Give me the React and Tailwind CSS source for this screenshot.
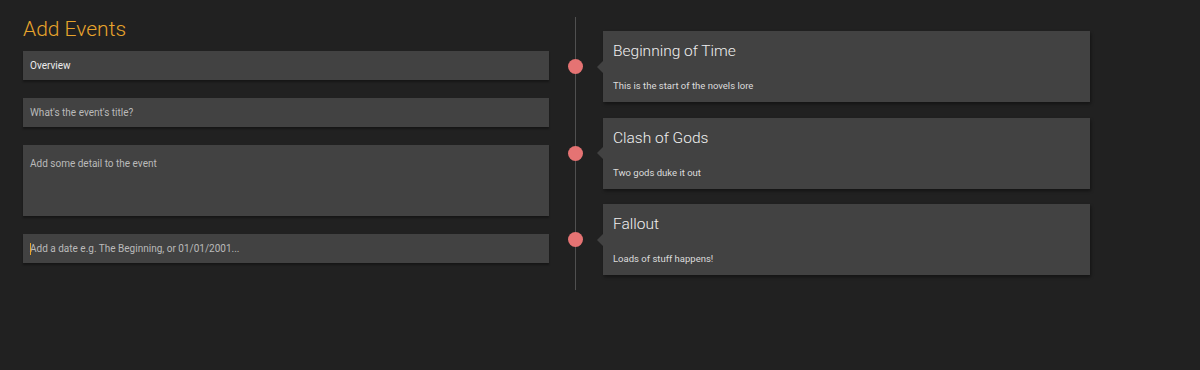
const events = [
  { title: 'Beginning of Time', body: 'This is the start of the novels lore' },
  { title: 'Clash of Gods', body: 'Two gods duke it out' },
  { title: 'Fallout', body: 'Loads of stuff happens!' },
];

const Field = ({ children, tall, value, caret }) => (
  <div
    className={`relative bg-[#424242] shadow-[0_2px_2px_rgba(0,0,0,0.35)] px-[7px] text-[10px] ${
      value ? 'text-[#ececec]' : 'text-[#bababa]'
    } ${tall ? 'h-[71px] pt-[11px]' : 'h-[29px] flex items-center'}`}
  >
    {caret && <span className="absolute left-[7px] top-[9px] w-[1px] h-[12px] bg-[#e8a42c]" />}
    {children}
  </div>
);

const EventCard = ({ title, body }) => (
  <div className="flex items-center h-[71px]">
    <div className="ml-[19px] w-[15px] h-[15px] rounded-full bg-[#e57373] shrink-0" />
    <div className="relative ml-[20px] w-[487px] h-full bg-[#424242] shadow-[1px_2px_3px_rgba(0,0,0,0.4)] px-[10px] pt-[9px]">
      <div className="absolute left-[-6px] top-1/2 -translate-y-1/2 w-0 h-0 border-y-[6px] border-y-transparent border-r-[6px] border-r-[#424242]" />
      <div className="text-[15.5px] font-light text-[#f0f0f0] leading-[22px]">{title}</div>
      <div className="mt-[17px] text-[9.5px] text-[#dcdcdc]">{body}</div>
    </div>
  </div>
);

const App = () => {
  return (
    <div className="w-[1200px] h-[370px] bg-[#212121] flex font-['Roboto',sans-serif]">
      <div className="ml-[23px] w-[526px] pt-[14px]">
        <h1 className="text-[21px] font-light text-[#e8a42c] leading-[30px]">Add Events</h1>
        <div className="mt-[7px] flex flex-col gap-[18px]">
          <Field value>Overview</Field>
          <Field>What's the event's title?</Field>
          <Field tall>Add some detail to the event</Field>
          <Field caret>Add a date e.g. The Beginning, or 01/01/2001...</Field>
        </div>
      </div>

      <div className="relative w-[560px] pt-[31px]">
        <div className="absolute left-[26px] top-[17px] w-[1px] h-[273px] bg-[#505050]" />
        <div className="relative flex flex-col gap-[15.5px]">
          {events.map((e) => (
            <EventCard key={e.title} title={e.title} body={e.body} />
          ))}
        </div>
      </div>
    </div>
  );
};

export default App;
